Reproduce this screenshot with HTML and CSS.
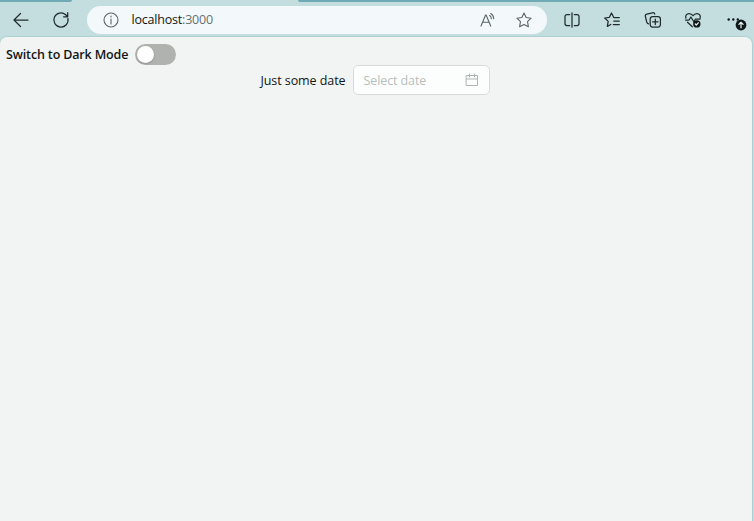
FILE: index.html
```html
<!DOCTYPE html>
<html lang="en">
<head>
<meta charset="utf-8">
<title>localhost:3000</title>
<link rel="stylesheet" href="styles.css">
</head>
<body>
<div class="tabs"><span class="tab-left"></span><span class="tab-right"></span></div>
<header class="toolbar">
  <svg class="icon" viewBox="0 0 18 18"><path d="M16 9H2M8.500 2.500 2 9l6.500 6.500"/></svg>
  <svg class="icon" viewBox="0 0 18 18"><path d="M15.900 7.500A7.100 7.100 0 1 1 13.700 3.700L15.500 5.500M15.700 1.700v4.100h-4.100"/></svg>
  <div class="address">
    <svg class="icon info" viewBox="0 0 18 18"><circle cx="9" cy="9" r="7"/><path d="M9 8v5M9 5v1"/></svg>
    <span class="url">localhost<span class="port">:3000</span></span>
    <svg class="icon read" viewBox="0 0 18 18"><path d="m2 15 4.600-11h.5l4.600 11M3.600 11.200h6.500M10.600 4.600c1.200.7 1.700 1.800 1.700 3.200M11.700 2.500c2 1.200 3 3 3 5.300"/></svg>
    <svg class="icon star" viewBox="0 0 18 18"><path d="m9 2 2.100 4.500 5 .7-3.600 3.500.9 5L9 13.400l-4.400 2.300.9-5L1.900 7.200l5-.7z"/></svg>
  </div>
  <div class="actions">
    <svg class="icon" viewBox="0 0 18 18"><path d="M6.700 3.500H4A2 2 0 0 0 2 5.500v7a2 2 0 0 0 2 2h2.700M11.300 3.500H14a2 2 0 0 1 2 2v7a2 2 0 0 1-2 2h-2.700M9 1.800v14.400"/></svg>
    <svg class="icon" viewBox="0 0 18 18"><path d="M16.300 6.500h-5.500L8.500 2 6.400 6.300l-4.700.7 3.500 3.400-.9 5 3.500-1.900M10.800 10h5.500M10.300 13.500h6"/></svg>
    <svg class="icon" viewBox="0 0 18 18"><rect x="6.200" y="5.500" width="10.200" height="10.500" rx="2.500"/><path d="M11.300 8v5.500M8.550 10.750h5.500M4.500 12.800C3.500 12.500 3 11.800 2.700 11L1.400 5.500c-.3-1.200.3-2 1.400-2.300l5.700-1.400c1.200-.3 2 .2 2.300 1.300"/></svg>
    <svg class="icon" viewBox="0 0 18 18"><path d="M1.900 7.200C1.100 4.500 2.700 2.500 5 2.500c1.800 0 3.200.8 4 2.200.8-1.400 2.200-2.200 4-2.200 2.300 0 3.900 2 3.100 4.700M1.500 9h3.600l1.800-3 2.900 4.800 1.700-2.800h4.500M3.500 11.200l4.800 4.600"/><circle class="solid" cx="12.800" cy="12.900" r="3.700"/><path class="light" d="m11.300 13 1 1 2-2.200"/></svg>
    <span class="more">
      <svg class="icon" viewBox="0 0 18 18"><circle class="dot" cx="3.700" cy="8.500" r="1.200"/><circle class="dot" cx="8.300" cy="8.500" r="1.200"/><circle class="dot" cx="12.800" cy="8.500" r="1.200"/></svg>
      <svg class="update" viewBox="0 0 12 12"><circle class="solid" cx="6" cy="6" r="5.400"/><path class="light" d="M6 8.800V3.400M3.900 5.400 6 3.300l2.100 2.100"/></svg>
    </span>
  </div>
</header>
<main class="page">
  <div class="theme">
    <span class="theme-label">Switch to Dark Mode</span>
    <button class="switch" type="button" role="switch" aria-checked="false" aria-label="Dark mode"><span class="knob"></span></button>
  </div>
  <div class="field">
    <span class="field-label">Just some date</span>
    <div class="picker">
      <span class="placeholder">Select date</span>
      <svg class="calendar" viewBox="0 0 14 14"><path d="M1.500 2.500h11v10h-11zM1.500 6h11M4.500 1v3M9.500 1v3"/></svg>
    </div>
  </div>
</main>
</body>
</html>
```

FILE: styles.css
```css
* { box-sizing: border-box; }

body {
  margin: 0;
  height: 521px;
  display: flex;
  flex-direction: column;
  overflow: hidden;
  background: #c4dedf;
  color: #121616;
  font-family: "Open Sans", "Noto Sans", sans-serif;
  font-size: 13px;
}

.tabs {
  height: 2px;
  display: flex;
  justify-content: space-between;
}
.tab-left, .tab-right { background: #70aab4; }
.tab-left { width: 72px; border-bottom-right-radius: 2px; }
.tab-right { width: 456px; border-bottom-left-radius: 2px; }

.toolbar {
  height: 35px;
  flex: none;
  display: flex;
  align-items: center;
  padding: 0 8px 0 11.500px;
  gap: 22.500px;
}

.icon {
  display: block;
  flex: none;
  width: 18px;
  height: 18px;
}
svg {
  fill: none;
  stroke: #202b2d;
  stroke-width: 1.250;
  stroke-linecap: round;
  stroke-linejoin: round;
}
.solid, .dot { fill: #101718; stroke: none; }
.light { stroke: #e5f0f0; }

.address {
  width: 460px;
  height: 28px;
  margin-left: -6px;
  flex: none;
  display: flex;
  align-items: center;
  padding: 0 14px 0 15px;
  border-radius: 14px;
  background: #f3f9fa;
}
.address .icon { stroke: #5c6566; stroke-width: 1.100; }
.url {
  margin-left: 12px;
  font-size: 12.500px;
  line-height: 18px;
  letter-spacing: -0.200px;
}
.port { color: #657071; }
.address .read { margin-left: auto; }
.address .star { margin-left: 18px; }

.actions {
  display: flex;
  gap: 22.500px;
  margin-left: -6.500px;
}
.more { position: relative; }
.update {
  position: absolute;
  left: 10px;
  top: 8px;
  width: 12px;
  height: 12px;
}

.page {
  flex: 1;
  margin-right: 2px;
  padding: 7px 8px 0 6px;
  border-radius: 7px 7px 0 0;
  background: #f1f4f2;
  box-shadow: 0 0 1px 1px #afd0d3;
}

.theme {
  height: 21px;
  display: flex;
  align-items: center;
  gap: 7px;
}
.theme-label {
  width: 122px;
  font-weight: 600;
  font-size: 12.500px;
  line-height: 20px;
  letter-spacing: -0.150px;
  white-space: nowrap;
}

.switch {
  width: 41px;
  height: 21px;
  padding: 2px;
  border: 0;
  border-radius: 11px;
  background: #b0b2b0;
}
.knob {
  display: block;
  width: 17px;
  height: 17px;
  border-radius: 50%;
  background: #fff;
  box-shadow: 0 1px 2px #0003;
}

.field {
  display: flex;
  align-items: center;
  justify-content: center;
  gap: 7px;
}
.field-label {
  width: 85px;
  padding-top: 1px;
  font-size: 12.500px;
  letter-spacing: -0.080px;
  white-space: nowrap;
}
.picker {
  width: 137px;
  height: 30px;
  display: flex;
  align-items: center;
  justify-content: space-between;
  padding: 0 10px;
  border: 1px solid #d7dcda;
  border-radius: 5px;
  background: #fcfefd;
}
.placeholder { font-size: 12.500px; letter-spacing: -0.100px; color: #b8bebb; }
.calendar {
  width: 14px;
  height: 14px;
  stroke: #aeb6b2;
  stroke-width: 1;
  stroke-linejoin: miter;
}
```
